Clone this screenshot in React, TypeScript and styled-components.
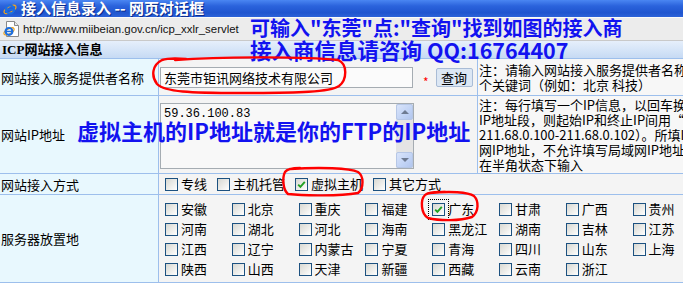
import styled, { createGlobalStyle } from "styled-components";

const GlobalStyle = createGlobalStyle`
  html, body { margin: 0; padding: 0; }
  body {
    width: 683px;
    height: 283px;
    overflow: hidden;
    background: #f4f4f4;
    font-family: "Noto Sans CJK SC", sans-serif;
  }
`;

const provinces = [
  "安徽", "北京", "重庆", "福建", "广东", "甘肃", "广西", "贵州",
  "河南", "湖北", "河北", "海南", "黑龙江", "湖南", "吉林", "江苏",
  "江西", "辽宁", "内蒙古", "宁夏", "青海", "四川", "山东", "上海",
  "陕西", "山西", "天津", "新疆", "西藏", "云南", "浙江",
];

const accessTypes = ["专线", "主机托管", "虚拟主机", "其它方式"];

const IeLogo = ({ size = 14 }: { size?: number }) => (
  <svg width={size} height={size} viewBox="0 0 16 16">
    <ellipse cx="8" cy="8.5" rx="7.5" ry="3.2" fill="none" stroke="#f3a51c" strokeWidth="1.4" transform="rotate(-30 8 8.5)" />
    <circle cx="8" cy="8.5" r="4.6" fill="none" stroke="#1d6fe0" strokeWidth="2.6" />
    <rect x="4" y="7.8" width="8.5" height="1.8" fill="#1d6fe0" />
  </svg>
);

const PageIcon = () => (
  <svg width="18" height="18" viewBox="0 0 18 18">
    <path d="M3.5 1.5 H11.5 L15.5 5.5 V16.5 H3.5 Z" fill="#fff" stroke="#8a8a8a" />
    <path d="M11.5 1.5 V5.5 H15.5" fill="#e8e8e8" stroke="#8a8a8a" />
    <g transform="translate(0 5) scale(0.75)">
      <ellipse cx="8" cy="8.5" rx="7.5" ry="3.2" fill="none" stroke="#f3a51c" strokeWidth="1.6" transform="rotate(-30 8 8.5)" />
      <circle cx="8" cy="8.5" r="4.6" fill="none" stroke="#1d6fe0" strokeWidth="2.8" />
      <rect x="4" y="7.6" width="8.5" height="2" fill="#1d6fe0" />
    </g>
  </svg>
);

const Check = () => (
  <svg width="9" height="9" viewBox="0 0 9 9">
    <path d="M1.2 4.6 L3.4 6.8 L7.8 1.8" fill="none" stroke="#21a121" strokeWidth="1.9" />
  </svg>
);

export default function App() {
  return (
    <>
      <GlobalStyle />
      <Window>
        <TitleBar>
          <IeLogo />
          <Title>接入信息录入 -- 网页对话框</Title>
        </TitleBar>
        <AddressBar>
          <PageIcon />
          <Url>http://www.miibeian.gov.cn/icp_xxlr_servlet</Url>
        </AddressBar>
        <SectionHeader>ICP网站接入信息</SectionHeader>
        <FormTable>
          <colgroup>
            <col width={159} />
            <col width={319} />
            <col width={282} />
          </colgroup>
          <tbody>
            <tr>
              <LabelCell $h={36}>网站接入服务提供者名称</LabelCell>
              <ValueCell>
                <InputRow>
                  <TextInput>东莞市钜讯网络技术有限公司</TextInput>
                  <Required>*</Required>
                  <QueryButton>查询</QueryButton>
                </InputRow>
              </ValueCell>
              <NoteCell $pt={3}>
                注：请输入网站接入服务提供者名称中的一
                <br />
                个关键词（例如：北京 科技）
              </NoteCell>
            </tr>
            <tr>
              <LabelCell $h={77}>网站IP地址</LabelCell>
              <ValueCell>
                <TextBox>
                  <TextContent>59.36.100.83</TextContent>
                  <ScrollBar>
                    <ScrollButton>
                      <Arrow $up />
                    </ScrollButton>
                    <ScrollTrack />
                    <ScrollButton>
                      <Arrow />
                    </ScrollButton>
                  </ScrollBar>
                </TextBox>
              </ValueCell>
              <NoteCell $pt={1}>
                注：每行填写一个IP信息，以回车换行；如果是
                <br />
                IP地址段，则起始IP和终止IP间用“-”连接（如：
                <br />
                211.68.0.100-211.68.0.102）。所填IP应为公
                <br />
                网IP地址，不允许填写局域网IP地址。请
                <br />
                在半角状态下输入
              </NoteCell>
            </tr>
            <tr>
              <LabelCell $h={20}>网站接入方式</LabelCell>
              <ValueCell colSpan={2}>
                <TypeRow>
                  {accessTypes.map((t) => (
                    <Option key={t}>
                      <Box>{t === "虚拟主机" && <Check />}</Box>
                      {t}
                    </Option>
                  ))}
                </TypeRow>
              </ValueCell>
            </tr>
            <tr>
              <LabelCell $h={83}>服务器放置地</LabelCell>
              <ValueCell colSpan={2}>
                <ProvinceGrid>
                  {provinces.map((p) => (
                    <Option key={p}>
                      <Box $focus={p === "广东"}>{p === "广东" && <Check />}</Box>
                      {p}
                    </Option>
                  ))}
                </ProvinceGrid>
              </ValueCell>
            </tr>
          </tbody>
        </FormTable>

        <Annotation $left={250} $top={18} $size={20}>
          可输入"东莞"点:"查询"找到如图的接入商
        </Annotation>
        <Annotation $left={250} $top={39} $size={21.5}>
          接入商信息请咨询 QQ:16764407
        </Annotation>
        <Annotation $left={77} $top={119} $size={22}>
          虚拟主机的IP地址就是你的FTP的IP地址
        </Annotation>

        <Marks width="683" height="283" viewBox="0 0 683 283">
          <path d="M175 60 C220 57 300 56 338 60 C348 64 347 80 339 86 C330 92 300 93 240 93 C190 93 165 92 157 84 C151 76 152 65 162 60 C168 58 174 58 186 59" />
          <path d="M290 169 C320 167 350 168 358 172 C364 176 364 188 358 193 C340 196 305 196 288 194 C283 190 282 178 285 172 C287 169 292 168 300 168" />
          <path d="M430 193 C450 191 468 192 474 196 C479 201 479 212 472 217 C460 221 440 221 428 218 C421 214 420 200 425 195 C428 192 435 192 445 192" />
        </Marks>
      </Window>
    </>
  );
}

const Window = styled.div`
  position: relative;
  width: 683px;
  height: 283px;
  overflow: hidden;
  background: #f4f4f4;
`;

const TitleBar = styled.div`
  display: flex;
  align-items: center;
  gap: 4px;
  height: 17px;
  padding-left: 3px;
  background: linear-gradient(to bottom, #4a86f2 0%, #2b63dc 35%, #1f55cf 75%, #2c62d8 100%);
`;

const Title = styled.span`
  color: #fff;
  font-size: 15px;
  font-weight: 700;
  line-height: 17px;
  margin-top: -3px;
  text-shadow: 1px 1px 0 #0a2a8a;
  white-space: nowrap;
`;

const AddressBar = styled.div`
  display: flex;
  align-items: center;
  gap: 2px;
  box-sizing: border-box;
  height: 24px;
  padding-left: 3px;
  background: #ececec;
  border-top: 1px solid #fafafa;
  border-bottom: 1px solid #c9c9c9;
`;

const Url = styled.span`
  font-family: "Liberation Sans", Arial, sans-serif;
  font-size: 11.4px;
  color: #111;
  white-space: nowrap;
`;

const SectionHeader = styled.div`
  height: 17px;
  line-height: 17px;
  padding-left: 2px;
  background: linear-gradient(to bottom, #e6effb 0%, #d3e3f7 60%, #c6daf4 100%);
  font-family: "Liberation Serif", "Noto Sans CJK SC", serif;
  font-size: 13px;
  font-weight: 700;
  color: #000;
`;

const FormTable = styled.table`
  border-collapse: collapse;
  table-layout: fixed;
  width: 760px;
  margin-left: -1px;
  font-size: 13px;
  color: #000;
`;

const LabelCell = styled.td<{ $h: number }>`
  height: ${(p) => p.$h}px;
  padding: 0 0 0 1px;
  background: #e8f8fe;
  border: 1px solid #9dbfec;
  white-space: nowrap;
  vertical-align: middle;
`;

const ValueCell = styled.td`
  padding: 0;
  background: #f4f4f4;
  border: 1px solid #9dbfec;
  vertical-align: middle;
`;

const NoteCell = styled.td<{ $pt: number }>`
  padding: ${(p) => p.$pt}px 0 0 1px;
  background: #f7f7f7;
  border: 1px solid #9dbfec;
  vertical-align: top;
  line-height: 15px;
  white-space: nowrap;
  overflow: hidden;
`;

const InputRow = styled.div`
  display: flex;
  align-items: center;
  padding-left: 1px;
`;

const TextInput = styled.div`
  box-sizing: border-box;
  width: 253px;
  height: 21px;
  line-height: 19px;
  padding-left: 3px;
  background: #fbfbfb;
  border: 1px solid #a5acb2;
  white-space: nowrap;
`;

const Required = styled.span`
  margin: 8px 0 0 10px;
  color: #f00;
  font-size: 12px;
`;

const QueryButton = styled.button`
  box-sizing: border-box;
  width: 37px;
  height: 19px;
  margin-left: 7px;
  margin-top: 1px;
  padding: 0;
  font-family: "Noto Sans CJK SC", sans-serif;
  font-size: 13px;
  line-height: 17px;
  color: #000;
  background: #dce7f4;
  border: 1px solid #a9bcd6;
  border-radius: 2px;
`;

const TextBox = styled.div`
  display: flex;
  box-sizing: border-box;
  width: 254px;
  height: 66px;
  margin-left: 1px;
  margin-top: 2px;
  background: #f8f8f8;
  border: 1px solid #a5acb2;
`;

const TextContent = styled.div`
  flex: 1;
  padding: 3px 0 0 3px;
  font-family: "Liberation Mono", monospace;
  font-size: 12px;
  line-height: 15px;
`;

const ScrollBar = styled.div`
  display: flex;
  flex-direction: column;
  width: 17px;
  background: #e4e4e4;
`;

const ScrollButton = styled.div`
  display: flex;
  align-items: center;
  justify-content: center;
  box-sizing: border-box;
  height: 16px;
  background: linear-gradient(135deg, #d9e4fa 0%, #c1d3f5 60%, #b2c6ee 100%);
  border: 1px solid #b6c7e6;
  border-radius: 2px;
`;

const ScrollTrack = styled.div`
  flex: 1;
`;

const Arrow = styled.span<{ $up?: boolean }>`
  width: 0;
  height: 0;
  border-left: 4px solid transparent;
  border-right: 4px solid transparent;
  ${(p) => (p.$up ? "border-bottom: 4px solid #6e7b92;" : "border-top: 4px solid #6e7b92;")}
`;

const TypeRow = styled.div`
  display: flex;
  align-items: center;
  gap: 10px;
  padding: 0 0 0 6px;
`;

const ProvinceGrid = styled.div`
  display: grid;
  grid-template-columns: repeat(8, 66.8px);
  grid-auto-rows: 20px;
  padding: 4px 0 3px 6px;
`;

const Option = styled.label`
  display: flex;
  align-items: center;
  gap: 3px;
  white-space: nowrap;
  line-height: 18px;
`;

const Box = styled.span<{ $focus?: boolean }>`
  display: inline-flex;
  align-items: center;
  justify-content: center;
  box-sizing: border-box;
  flex-shrink: 0;
  width: 13px;
  height: 13px;
  border: 1px solid #1c5180;
  background: linear-gradient(135deg, #d8d8d2 0%, #ededea 55%, #ffffff 100%);
  outline: ${(p) => (p.$focus ? "1px dotted #000" : "none")};
  outline-offset: 3px;
`;

const Annotation = styled.div<{ $left: number; $top: number; $size: number }>`
  position: absolute;
  left: ${(p) => p.$left}px;
  top: ${(p) => p.$top}px;
  color: #1212f0;
  font-family: "Noto Sans CJK SC", sans-serif;
  font-size: ${(p) => p.$size}px;
  font-weight: 700;
  line-height: 1;
  white-space: nowrap;
`;

const Marks = styled.svg`
  position: absolute;
  left: 0;
  top: 0;
  pointer-events: none;
  fill: none;
  stroke: #f00;
  stroke-width: 2.4;
  stroke-linecap: round;
`;
